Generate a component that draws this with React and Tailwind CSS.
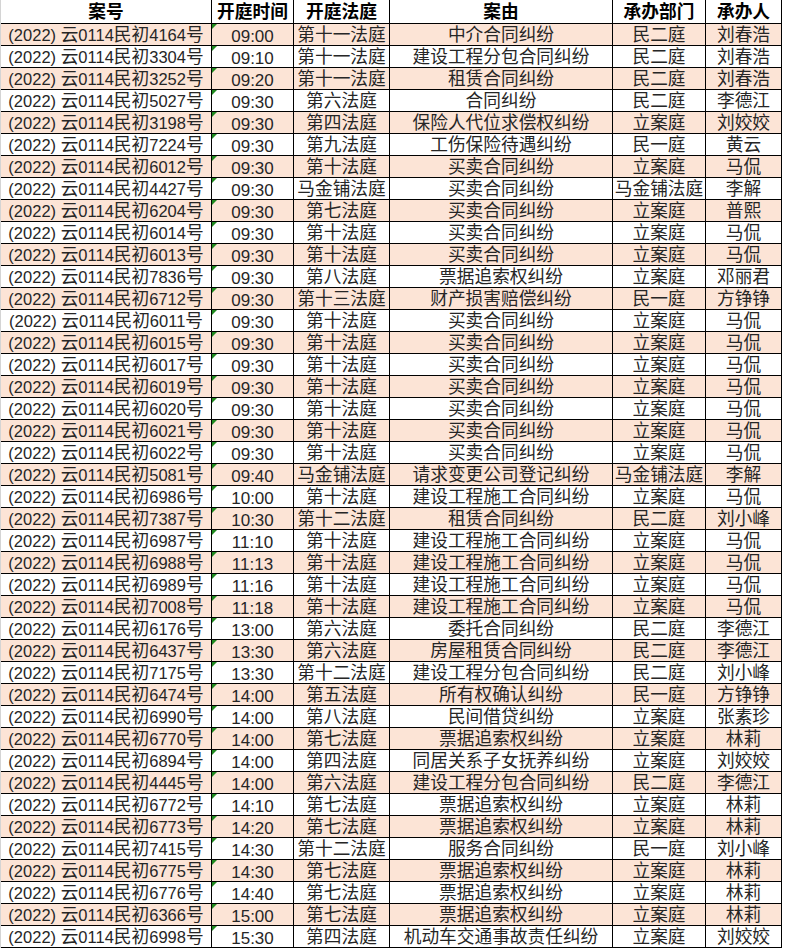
import React from "react";

const rows = [
  ["4164", "09:00", "第十一法庭", "中介合同纠纷", "民二庭", "刘春浩"],
  ["3304", "09:10", "第十一法庭", "建设工程分包合同纠纷", "民二庭", "刘春浩"],
  ["3252", "09:20", "第十一法庭", "租赁合同纠纷", "民二庭", "刘春浩"],
  ["5027", "09:30", "第六法庭", "合同纠纷", "民二庭", "李德江"],
  ["3198", "09:30", "第四法庭", "保险人代位求偿权纠纷", "立案庭", "刘姣姣"],
  ["7224", "09:30", "第九法庭", "工伤保险待遇纠纷", "民一庭", "黄云"],
  ["6012", "09:30", "第十法庭", "买卖合同纠纷", "立案庭", "马侃"],
  ["4427", "09:30", "马金铺法庭", "买卖合同纠纷", "马金铺法庭", "李解"],
  ["6204", "09:30", "第七法庭", "买卖合同纠纷", "立案庭", "普熙"],
  ["6014", "09:30", "第十法庭", "买卖合同纠纷", "立案庭", "马侃"],
  ["6013", "09:30", "第十法庭", "买卖合同纠纷", "立案庭", "马侃"],
  ["7836", "09:30", "第八法庭", "票据追索权纠纷", "立案庭", "邓丽君"],
  ["6712", "09:30", "第十三法庭", "财产损害赔偿纠纷", "民一庭", "方铮铮"],
  ["6011", "09:30", "第十法庭", "买卖合同纠纷", "立案庭", "马侃"],
  ["6015", "09:30", "第十法庭", "买卖合同纠纷", "立案庭", "马侃"],
  ["6017", "09:30", "第十法庭", "买卖合同纠纷", "立案庭", "马侃"],
  ["6019", "09:30", "第十法庭", "买卖合同纠纷", "立案庭", "马侃"],
  ["6020", "09:30", "第十法庭", "买卖合同纠纷", "立案庭", "马侃"],
  ["6021", "09:30", "第十法庭", "买卖合同纠纷", "立案庭", "马侃"],
  ["6022", "09:30", "第十法庭", "买卖合同纠纷", "立案庭", "马侃"],
  ["5081", "09:40", "马金铺法庭", "请求变更公司登记纠纷", "马金铺法庭", "李解"],
  ["6986", "10:00", "第十法庭", "建设工程施工合同纠纷", "立案庭", "马侃"],
  ["7387", "10:30", "第十二法庭", "租赁合同纠纷", "民二庭", "刘小峰"],
  ["6987", "11:10", "第十法庭", "建设工程施工合同纠纷", "立案庭", "马侃"],
  ["6988", "11:13", "第十法庭", "建设工程施工合同纠纷", "立案庭", "马侃"],
  ["6989", "11:16", "第十法庭", "建设工程施工合同纠纷", "立案庭", "马侃"],
  ["7008", "11:18", "第十法庭", "建设工程施工合同纠纷", "立案庭", "马侃"],
  ["6176", "13:00", "第六法庭", "委托合同纠纷", "民二庭", "李德江"],
  ["6437", "13:30", "第六法庭", "房屋租赁合同纠纷", "民二庭", "李德江"],
  ["7175", "13:30", "第十二法庭", "建设工程分包合同纠纷", "民二庭", "刘小峰"],
  ["6474", "14:00", "第五法庭", "所有权确认纠纷", "民一庭", "方铮铮"],
  ["6990", "14:00", "第八法庭", "民间借贷纠纷", "立案庭", "张素珍"],
  ["6770", "14:00", "第七法庭", "票据追索权纠纷", "立案庭", "林莉"],
  ["6894", "14:00", "第四法庭", "同居关系子女抚养纠纷", "立案庭", "刘姣姣"],
  ["4445", "14:00", "第六法庭", "建设工程分包合同纠纷", "民二庭", "李德江"],
  ["6772", "14:10", "第七法庭", "票据追索权纠纷", "立案庭", "林莉"],
  ["6773", "14:20", "第七法庭", "票据追索权纠纷", "立案庭", "林莉"],
  ["7415", "14:30", "第十二法庭", "服务合同纠纷", "民一庭", "刘小峰"],
  ["6775", "14:30", "第七法庭", "票据追索权纠纷", "立案庭", "林莉"],
  ["6776", "14:40", "第七法庭", "票据追索权纠纷", "立案庭", "林莉"],
  ["6366", "15:00", "第七法庭", "票据追索权纠纷", "立案庭", "林莉"],
  ["6998", "15:30", "第四法庭", "机动车交通事故责任纠纷", "立案庭", "刘姣姣"],
];

function Mixed({ text }) {
  const parts = text.split(/([\u3400-\u9fff]+)/).filter((p) => p.length > 0);
  return (
    <span className="whitespace-pre">
      {parts.map((p, i) =>
        /[\u3400-\u9fff]/.test(p) ? (
          <span key={i} className="text-[17.7px]">
            {p}
          </span>
        ) : (
          <span key={i} className="text-[16.5px]">
            {p}
          </span>
        )
      )}
    </span>
  );
}

const cell =
  "shrink-0 border-r border-black flex items-center justify-center overflow-hidden whitespace-nowrap";

export default function App() {
  return (
    <div className="w-[785px] h-[951px] bg-white font-['Liberation_Sans','Noto_Sans_CJK_SC',sans-serif] text-[#262626] leading-none">
      <div className="w-[782px] border-l border-[#d4d4d4]">
        <div className="flex h-[24px] border-b border-black font-bold text-black text-[17.7px]">
          <div className={`${cell} w-[211px] pt-[2px]`}>案号</div>
          <div className={`${cell} w-[82px] pt-[2px]`}>开庭时间</div>
          <div className={`${cell} w-[96px] pt-[2px]`}>开庭法庭</div>
          <div className={`${cell} w-[223px] pt-[2px]`}>案由</div>
          <div className={`${cell} w-[93px] pt-[2px]`}>承办部门</div>
          <div className={`${cell} w-[76px] pt-[2px]`}>承办人</div>
        </div>
        {rows.map((r, i) => (
          <div
            key={i}
            className={`flex h-[22px] border-b border-black ${
              i % 2 === 0 ? "bg-[#fce4d6]" : "bg-white"
            }`}
          >
            <div className={`${cell} w-[211px] pt-[3px]`}>
              <Mixed text={`(2022) 云0114民初${r[0]}号`} />
            </div>
            <div className={`${cell} relative w-[82px] pt-[3px] text-[17px]`}>
              <div className="absolute left-0 top-0 h-0 w-0 border-t-[5px] border-r-[5px] border-t-[#1f8a1f] border-r-transparent" />
              {r[1]}
            </div>
            <div className={`${cell} w-[96px] pt-[3px] text-[17.7px]`}>{r[2]}</div>
            <div className={`${cell} w-[223px] pt-[3px] text-[17.7px]`}>{r[3]}</div>
            <div className={`${cell} w-[93px] pt-[3px] text-[17.7px]`}>{r[4]}</div>
            <div className={`${cell} w-[76px] pt-[3px] text-[17.7px]`}>{r[5]}</div>
          </div>
        ))}
      </div>
    </div>
  );
}
